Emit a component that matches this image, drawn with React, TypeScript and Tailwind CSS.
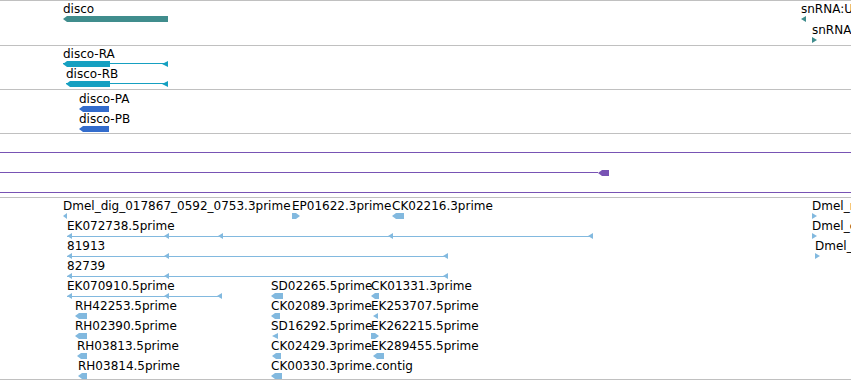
import React from 'react';

type Block = [number, number, number]; // offset, width, strand (-1 left, 1 right)

type Feat = {
  label: string;
  x: number;
  y: number;
  w: number;
  blocks: Block[];
  line?: boolean;
};

const arrowPoints = (x: number, w: number, dir: number) => {
  const tip = Math.min(4, w);
  if (dir < 0) {
    return w <= 6
      ? `${x},3 ${x + w},0 ${x + w},6`
      : `${x},3 ${x + tip},0 ${x + w},0 ${x + w},6 ${x + tip},6`;
  }
  if (dir > 0) {
    return w <= 6
      ? `${x},0 ${x + w},3 ${x},6`
      : `${x},0 ${x + w - tip},0 ${x + w},3 ${x + w - tip},6 ${x},6`;
  }
  return `${x},0 ${x + w},0 ${x + w},6 ${x},6`;
};

// features sit at their genome coordinate on the track canvas
function Feature({ f, color, lineY = 2 }: { f: Feat; color: string; lineY?: number }) {
  return (
    <div className="absolute" style={{ left: f.x, top: f.y }}>
      <div className="whitespace-nowrap">{f.label}</div>
      <svg width={f.w} height={6} className="block">
        {f.line && <rect x={0} y={lineY} width={f.w} height={1} fill={color} />}
        {f.blocks.map(([x, w, dir], i) => (
          <polygon key={i} points={arrowPoints(x, w, dir)} fill={color} />
        ))}
      </svg>
    </div>
  );
}

const genes: Feat[] = [
  { label: 'disco', x: 63, y: 1, w: 105, blocks: [[0, 105, -1]] },
  { label: 'snRNA:U', x: 801, y: 1, w: 5, blocks: [[0, 5, -1]] },
  { label: 'snRNA', x: 812, y: 22, w: 5, blocks: [[0, 5, 1]] },
];

const transcripts: Feat[] = [
  { label: 'disco-RA', x: 63, y: 1, w: 105, line: true, blocks: [[0, 47, -1], [99, 6, -1]] },
  { label: 'disco-RB', x: 66, y: 21, w: 102, line: true, blocks: [[0, 44, -1], [96, 6, -1]] },
];

const proteins: Feat[] = [
  { label: 'disco-PA', x: 79, y: 2, w: 30, blocks: [[0, 30, -1]] },
  { label: 'disco-PB', x: 79, y: 22, w: 30, blocks: [[0, 30, -1]] },
];

const row = (i: number) => 1 + i * 20;

const ests: Feat[] = [
  { label: 'Dmel_dig_017867_0592_0753.3prime', x: 63, y: row(0), w: 4, blocks: [[0, 4, -1]] },
  { label: 'EP01622.3prime', x: 292, y: row(0), w: 8, blocks: [[0, 8, 1]] },
  { label: 'CK02216.3prime', x: 392, y: row(0), w: 12, blocks: [[0, 12, -1]] },
  { label: 'Dmel_rev_017867', x: 812, y: row(0), w: 5, blocks: [[0, 5, 1]] },
  {
    label: 'EK072738.5prime', x: 67, y: row(1), w: 526, line: true,
    blocks: [[0, 5, -1], [97, 5, -1], [151, 5, -1], [321, 5, -1], [521, 5, -1]],
  },
  { label: 'Dmel_cdna_0592', x: 812, y: row(1), w: 5, blocks: [[0, 5, 1]] },
  { label: '81913', x: 67, y: row(2), w: 381, line: true, blocks: [[0, 5, -1], [97, 5, -1], [376, 5, -1]] },
  { label: 'Dmel_dig_0753', x: 815, y: row(2), w: 5, blocks: [[0, 5, 1]] },
  { label: '82739', x: 67, y: row(3), w: 381, line: true, blocks: [[0, 5, -1], [97, 5, -1], [376, 5, -1]] },
  { label: 'EK070910.5prime', x: 67, y: row(4), w: 155, line: true, blocks: [[0, 5, -1], [97, 5, -1], [150, 5, -1]] },
  { label: 'SD02265.5prime', x: 271, y: row(4), w: 12, blocks: [[0, 12, -1]] },
  { label: 'CK01331.3prime', x: 371, y: row(4), w: 8, blocks: [[0, 8, -1]] },
  { label: 'RH42253.5prime', x: 75, y: row(5), w: 12, blocks: [[0, 12, -1]] },
  { label: 'CK02089.3prime', x: 271, y: row(5), w: 9, blocks: [[0, 9, -1]] },
  { label: 'EK253707.5prime', x: 371, y: row(5), w: 7, blocks: [[2, 5, -1]] },
  { label: 'RH02390.5prime', x: 75, y: row(6), w: 12, blocks: [[0, 12, -1]] },
  { label: 'SD16292.5prime', x: 271, y: row(6), w: 7, blocks: [[1, 6, -1]] },
  { label: 'EK262215.5prime', x: 371, y: row(6), w: 8, blocks: [[0, 8, 1]] },
  { label: 'RH03813.5prime', x: 77, y: row(7), w: 10, blocks: [[0, 10, -1]] },
  { label: 'CK02429.3prime', x: 271, y: row(7), w: 10, blocks: [[1, 9, -1]] },
  { label: 'EK289455.5prime', x: 371, y: row(7), w: 13, blocks: [[2, 11, -1]] },
  { label: 'RH03814.5prime', x: 78, y: row(8), w: 9, blocks: [[0, 9, -1]] },
  { label: 'CK00330.3prime.contig', x: 271, y: row(8), w: 11, blocks: [[0, 11, -1]] },
];

function Track({ feats, color, h, lineY }: { feats: Feat[]; color: string; h: string; lineY?: number }) {
  return (
    <div className={`relative border-t border-[#c0c0c0] ${h}`}>
      {feats.map((f) => (
        <Feature key={f.label} f={f} color={color} lineY={lineY} />
      ))}
    </div>
  );
}

export default function App() {
  return (
    <div className="w-[851px] h-[381px] overflow-hidden bg-white text-black font-['DejaVu_Sans',sans-serif] text-[12px] leading-[14px]">
      <Track feats={genes} color="#408d8d" h="h-[45px]" />
      <Track feats={transcripts} color="#16a0c1" h="h-[44px]" />
      <Track feats={proteins} color="#336ccc" h="h-[44px]" />

      {/* long features running past both edges of the view */}
      <div className="h-[64px] border-t border-[#c0c0c0] pt-[18px] pb-[4px] flex flex-col justify-between">
        <div className="h-px bg-[#7853b4]" />
        <div className="flex items-center h-[6px]">
          <div className="w-[598px] h-px bg-[#7853b4]" />
          <svg width={11} height={6} className="block">
            <polygon points={arrowPoints(0, 11, -1)} fill="#7853b4" />
          </svg>
        </div>
        <div className="h-px bg-[#7853b4]" />
      </div>

      <div className="relative h-[183px] border-y border-[#c0c0c0]">
        {ests.map((f) => (
          <Feature key={f.label} f={f} color="#82b9df" lineY={3} />
        ))}
      </div>
    </div>
  );
}
